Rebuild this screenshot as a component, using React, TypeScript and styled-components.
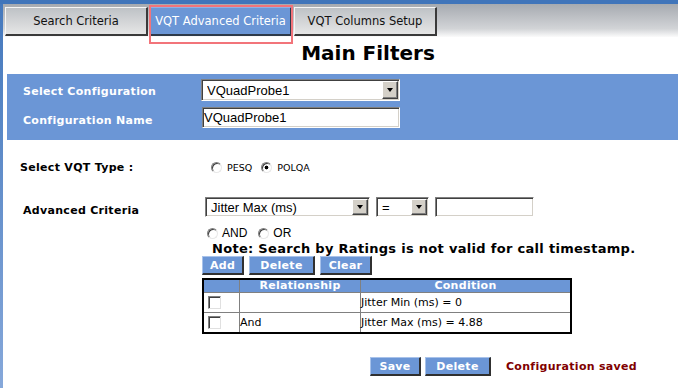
import React from "react"
import styled, { createGlobalStyle } from "styled-components"

const blue = "#6b96d6"
const verdana = `"DejaVu Sans", Verdana, sans-serif`
const arial = `"Liberation Sans", Arial, sans-serif`

const GlobalStyle = createGlobalStyle`
  html, body {
    margin: 0;
    padding: 0;
    background: #fff;
    overflow: hidden;
  }
  body {
    font-family: ${verdana};
  }
`

const Frame = styled.div`
  width: 678px;
  height: 388px;
  display: flex;
  flex-direction: column;
  overflow: hidden;
`

const TopBar = styled.div`
  height: 4px;
  flex: none;
  background: #4075ba;
`

const Body = styled.div`
  flex: 1;
  display: flex;
  min-height: 0;
`

const LeftStrip = styled.div`
  width: 3px;
  flex: none;
  background: linear-gradient(#4579bd, #86a8da);
`

const Main = styled.div`
  width: 740px;
  flex: none;
  display: flex;
  flex-direction: column;
`

const TabBar = styled.div`
  height: 33px;
  padding: 3px 0 0 2px;
  box-sizing: border-box;
  display: flex;
  align-items: flex-start;
  gap: 2px;
  background: linear-gradient(#a6aab0, #d2d4d7 75%, #fbfbfb);
`

const Tab = styled.div<{ $active?: boolean; $width: number }>`
  position: relative;
  width: ${(p) => p.$width}px;
  height: 29px;
  box-sizing: border-box;
  display: flex;
  align-items: center;
  justify-content: center;
  font-size: 11.5px;
  color: ${(p) => (p.$active ? "#fff" : "#111")};
  background: ${(p) =>
    p.$active ? blue : "linear-gradient(#bec2c6, #e6e6e6)"};
  border-style: solid;
  border-width: 1px 2px 2px 1px;
  border-color: ${(p) =>
    p.$active ? "#8fb0e4 #2e3a4a #2e3a4a #8fb0e4" : "#f6f6f6 #3a3a3a #3a3a3a #f6f6f6"};

  /* review highlight drawn over the active tab */
  &::after {
    content: "";
    display: ${(p) => (p.$active ? "block" : "none")};
    position: absolute;
    left: -2px;
    top: -3px;
    right: -3px;
    bottom: -10px;
    border: 2px solid #f2747a;
  }
`

const Form = styled.div`
  margin-left: 4px;
  width: 722px;
  display: flex;
  flex-direction: column;
`

const Title = styled.h1`
  margin: 4px 0 9px;
  height: 24px;
  line-height: 24px;
  text-align: center;
  font-size: 20px;
  font-weight: bold;
  color: #000;
`

const ConfigPanel = styled.div`
  background: ${blue};
  padding: 5px 0 12px 16px;
  display: grid;
  grid-template-columns: 178px auto;
  row-gap: 6px;
  align-items: center;
`

const PanelLabel = styled.label<{ $drop: number }>`
  padding-top: ${(p) => p.$drop}px;
  color: #fff;
  font-size: 11px;
  font-weight: bold;
  letter-spacing: 0.3px;
`

const SelectBox = styled.div<{ $width: number; $height: number }>`
  width: ${(p) => p.$width}px;
  height: ${(p) => p.$height}px;
  box-sizing: border-box;
  display: flex;
  padding: 1px;
  background: #fff;
  border-style: solid;
  border-width: 1px;
  border-color: #808080 #fff #fff #808080;
  box-shadow: inset 1px 1px 0 #404040, inset -1px -1px 0 #d4d0c8;
`

const NativeSelect = styled.select`
  appearance: none;
  flex: 1;
  min-width: 0;
  border: none;
  outline: none;
  background: transparent;
  padding: 0 0 0 4px;
  font-family: ${arial};
  font-size: 13px;
  color: #000;
`

const ArrowButton = styled.span`
  width: 16px;
  flex: none;
  box-sizing: border-box;
  display: flex;
  align-items: center;
  justify-content: center;
  background: #d4d0c8;
  border-style: solid;
  border-width: 1px;
  border-color: #fff #404040 #404040 #fff;
  box-shadow: inset -1px -1px 0 #808080;

  &::before {
    content: "";
    border-left: 3.5px solid transparent;
    border-right: 3.5px solid transparent;
    border-top: 4px solid #000;
  }
`

const TextInput = styled.input<{ $width: number; $height: number; $offset?: number }>`
  width: ${(p) => p.$width}px;
  height: ${(p) => p.$height}px;
  margin-left: ${(p) => p.$offset ?? 0}px;
  box-sizing: border-box;
  padding: 0 1px;
  border-style: solid;
  border-width: 1px;
  border-color: #808080 #fff #fff #808080;
  box-shadow: inset 1px 1px 0 #404040, inset -1px -1px 0 #d4d0c8;
  background: #fff;
  outline: none;
  font-family: ${arial};
  font-size: 13px;
  color: #000;
`

const TypeRow = styled.div`
  margin-top: 20px;
  height: 14px;
  padding-left: 13px;
  display: flex;
  align-items: center;
`

const SectionLabel = styled.span<{ $width: number }>`
  width: ${(p) => p.$width}px;
  flex: none;
  font-size: 11px;
  font-weight: bold;
  letter-spacing: 0.3px;
  color: #000;
`

const RadioGroup = styled.div<{ $gap: number }>`
  display: flex;
  align-items: center;
  gap: ${(p) => p.$gap}px;
`

const RadioOption = styled.label<{ $small?: boolean }>`
  display: flex;
  align-items: center;
  gap: ${(p) => (p.$small ? 5 : 4)}px;
  font-family: ${(p) => (p.$small ? verdana : arial)};
  font-size: ${(p) => (p.$small ? 9.5 : 12)}px;
  color: #000;
`

const Radio = styled.input.attrs({ type: "radio" })`
  appearance: none;
  margin: 0;
  width: 11px;
  height: 11px;
  box-sizing: border-box;
  border-radius: 50%;
  border: 1px solid;
  border-color: #808080 #e8e8e8 #e8e8e8 #808080;
  box-shadow: inset 1px 1px 0 #404040;
  background: #fff;

  &:checked {
    background: radial-gradient(circle, #000 0 1.6px, #fff 2.2px);
  }
`

const AdvancedRow = styled.div`
  margin-top: 23px;
  padding-left: 16px;
  display: grid;
  grid-template-columns: 179px auto;
  align-items: start;
`

const AdvancedLabel = styled(SectionLabel)`
  padding-top: 7px;
  line-height: 14px;
`

const CriteriaColumn = styled.div`
  display: flex;
  flex-direction: column;
  align-items: flex-start;
`

const CriteriaLine = styled.div`
  display: flex;
  align-items: center;
  gap: 6px;
  padding-left: 3px;
`

const ConnectorLine = styled.div`
  margin-top: 9px;
  height: 14px;
  padding-left: 5px;
  display: flex;
  align-items: center;
`

const Note = styled.div`
  margin-top: 2px;
  padding-left: 10px;
  line-height: 14px;
  font-size: 13px;
  font-weight: bold;
  letter-spacing: 0.3px;
  white-space: nowrap;
  color: #000;
`

const ButtonRow = styled.div<{ $gap: number }>`
  display: flex;
  gap: ${(p) => p.$gap}px;
`

const ActionButton = styled.button<{ $width: number }>`
  width: ${(p) => p.$width}px;
  height: 19px;
  box-sizing: border-box;
  padding: 0;
  background: ${blue};
  color: #fff;
  font-family: ${verdana};
  font-size: 11px;
  font-weight: bold;
  letter-spacing: 0.3px;
  border-style: solid;
  border-width: 1px 2px 2px 1px;
  border-color: #a8c2ea #303030 #303030 #a8c2ea;
`

const Criteria = styled.table`
  margin-top: 3px;
  width: 370px;
  border-collapse: collapse;
  border: 2px solid #000;
  font-size: 11px;
  table-layout: fixed;
`

const HeadCell = styled.th<{ $width?: number }>`
  width: ${(p) => (p.$width ? `${p.$width}px` : "auto")};
  height: 12px;
  padding: 0;
  line-height: 12px;
  background: ${blue};
  color: #fff;
  font-weight: bold;
  letter-spacing: 0.3px;
  border: 1px solid #808080;
  border-top: 2px solid #000;
`

const Cell = styled.td`
  height: 19px;
  padding: 0;
  border: 1px solid #808080;
  color: #000;
  white-space: nowrap;
`

const Check = styled.input.attrs({ type: "checkbox" })`
  appearance: none;
  display: block;
  margin: 0 0 0 4px;
  width: 13px;
  height: 13px;
  box-sizing: border-box;
  border: 1px solid;
  border-color: #808080 #e0e0e0 #e0e0e0 #808080;
  box-shadow: inset 1px 1px 0 #404040;
  background: #fff;
`

const Footer = styled.div`
  margin-top: 23px;
  padding-left: 363px;
  display: flex;
  align-items: center;
`

const Status = styled.span`
  margin-left: 15px;
  font-size: 11px;
  font-weight: bold;
  letter-spacing: 0.3px;
  color: #800000;
`

const rows = [
  { relation: "", condition: "Jitter Min (ms) = 0" },
  { relation: "And", condition: "Jitter Max (ms) = 4.88" },
]

export default function App() {
  return (
    <Frame>
      <GlobalStyle />
      <TopBar />
      <Body>
        <LeftStrip />
        <Main>
          <TabBar>
            <Tab $width={143}>Search Criteria</Tab>
            <Tab $width={142} $active>
              VQT Advanced Criteria
            </Tab>
            <Tab $width={143}>VQT Columns Setup</Tab>
          </TabBar>
          <Form>
            <Title>Main Filters</Title>
            <ConfigPanel>
              <PanelLabel $drop={2}>Select Configuration</PanelLabel>
              <SelectBox $width={199} $height={22}>
                <NativeSelect defaultValue="VQuadProbe1">
                  <option>VQuadProbe1</option>
                </NativeSelect>
                <ArrowButton />
              </SelectBox>
              <PanelLabel $drop={5}>Configuration Name</PanelLabel>
              <TextInput
                $width={198}
                $height={21}
                $offset={1}
                defaultValue="VQuadProbe1"
              />
            </ConfigPanel>

            <TypeRow>
              <SectionLabel $width={191}>Select VQT Type :</SectionLabel>
              <RadioGroup $gap={9}>
                <RadioOption $small>
                  <Radio name="vqt" />
                  PESQ
                </RadioOption>
                <RadioOption $small>
                  <Radio name="vqt" defaultChecked />
                  POLQA
                </RadioOption>
              </RadioGroup>
            </TypeRow>

            <AdvancedRow>
              <AdvancedLabel $width={179}>Advanced Criteria</AdvancedLabel>
              <CriteriaColumn>
                <CriteriaLine>
                  <SelectBox $width={165} $height={20}>
                    <NativeSelect defaultValue="Jitter Max (ms)">
                      <option>Jitter Max (ms)</option>
                    </NativeSelect>
                    <ArrowButton />
                  </SelectBox>
                  <SelectBox $width={53} $height={20}>
                    <NativeSelect defaultValue="=">
                      <option>=</option>
                    </NativeSelect>
                    <ArrowButton />
                  </SelectBox>
                  <TextInput $width={99} $height={20} />
                </CriteriaLine>
                <ConnectorLine>
                  <RadioGroup $gap={11}>
                    <RadioOption>
                      <Radio name="join" />
                      AND
                    </RadioOption>
                    <RadioOption>
                      <Radio name="join" />
                      OR
                    </RadioOption>
                  </RadioGroup>
                </ConnectorLine>
                <Note>Note: Search by Ratings is not valid for call timestamp.</Note>
                <ButtonRow $gap={5}>
                  <ActionButton $width={42}>Add</ActionButton>
                  <ActionButton $width={66}>Delete</ActionButton>
                  <ActionButton $width={52}>Clear</ActionButton>
                </ButtonRow>
                <Criteria>
                  <thead>
                    <tr>
                      <HeadCell $width={35} />
                      <HeadCell $width={120}>Relationship</HeadCell>
                      <HeadCell>Condition</HeadCell>
                    </tr>
                  </thead>
                  <tbody>
                    {rows.map((r) => (
                      <tr key={r.condition}>
                        <Cell>
                          <Check />
                        </Cell>
                        <Cell>{r.relation}</Cell>
                        <Cell>{r.condition}</Cell>
                      </tr>
                    ))}
                  </tbody>
                </Criteria>
              </CriteriaColumn>
            </AdvancedRow>

            <Footer>
              <ButtonRow $gap={4}>
                <ActionButton $width={51}>Save</ActionButton>
                <ActionButton $width={66}>Delete</ActionButton>
              </ButtonRow>
              <Status>Configuration saved</Status>
            </Footer>
          </Form>
        </Main>
      </Body>
    </Frame>
  )
}
